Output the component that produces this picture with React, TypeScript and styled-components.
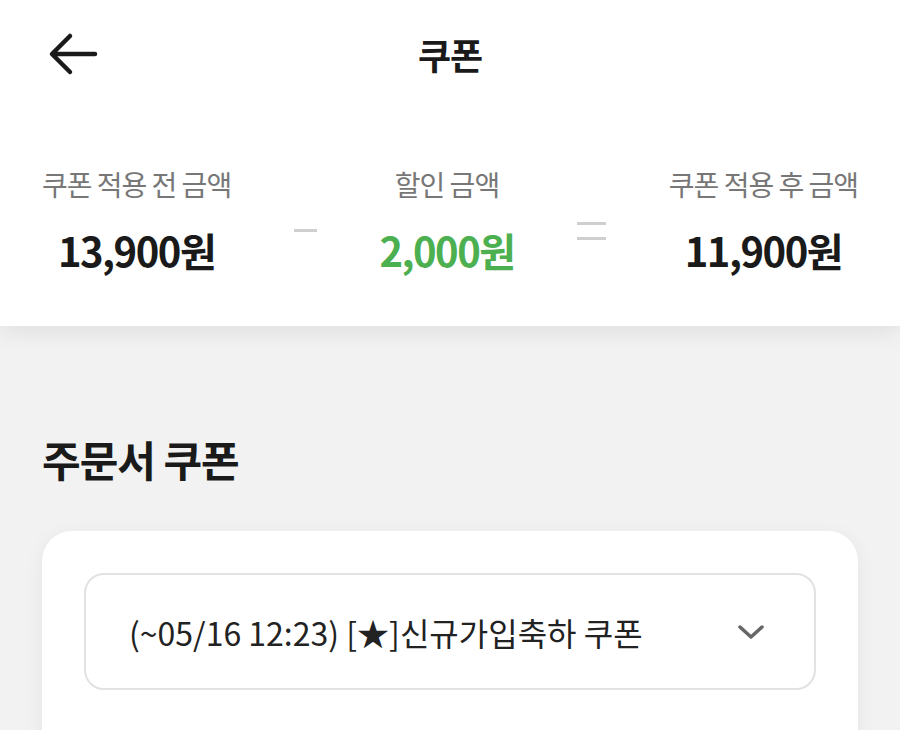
import styled, { createGlobalStyle } from "styled-components";

const GlobalStyle = createGlobalStyle`
  html, body {
    margin: 0;
    padding: 0;
    background: #f2f2f2;
    font-family: "Noto Sans CJK KR", "Noto Sans", sans-serif;
    color: #1a1a1a;
  }
`;

const Page = styled.div`
  width: 900px;
  height: 730px;
  overflow: hidden;
  background: #f2f2f2;
`;

const TopPanel = styled.div`
  background: #fff;
  box-shadow: 0 6px 22px rgba(0, 0, 0, 0.08);
  padding-bottom: 52px;
  position: relative;
  z-index: 1;
`;

const NavBar = styled.div`
  display: grid;
  grid-template-columns: 1fr auto 1fr;
  align-items: center;
  height: 108px;
  padding: 0 48px;
`;

const BackButton = styled.button`
  justify-self: start;
  border: 0;
  background: none;
  padding: 0;
  display: flex;
  cursor: pointer;
`;

const Title = styled.h1`
  margin: 0;
  font-size: 36px;
  font-weight: 700;
  letter-spacing: -1px;
  color: #1a1a1a;
`;

const Summary = styled.div`
  display: flex;
  justify-content: space-between;
  align-items: flex-start;
  padding: 0 42px;
  margin-top: 58px;
`;

const Column = styled.div`
  display: flex;
  flex-direction: column;
  align-items: center;
  gap: 24px;
`;

const Label = styled.div`
  font-size: 28px;
  font-weight: 400;
  color: #777;
  letter-spacing: -1px;
  line-height: 36px;
`;

const Value = styled.div<{ $accent?: boolean }>`
  font-size: 40px;
  font-weight: 700;
  letter-spacing: -1.5px;
  line-height: 48px;
  color: ${(p) => (p.$accent ? "#4caf50" : "#1a1a1a")};
`;

const Operator = styled.div<{ $double?: boolean }>`
  width: ${(p) => (p.$double ? 29 : 23)}px;
  height: ${(p) => (p.$double ? 18 : 3)}px;
  border-top: 3px solid #cfcfcf;
  border-bottom: ${(p) => (p.$double ? "3px solid #cfcfcf" : "0")};
  box-sizing: border-box;
  margin-top: ${(p) => (p.$double ? 56 : 63)}px;
`;

const Section = styled.div`
  padding: 0 42px;
`;

const SectionTitle = styled.h2`
  margin: 108px 0 47px;
  font-size: 42px;
  font-weight: 700;
  letter-spacing: -1px;
  line-height: 50px;
  color: #1a1a1a;
`;

const Card = styled.div`
  background: #fff;
  border-radius: 30px;
  padding: 42px;
  box-shadow: 0 4px 20px rgba(0, 0, 0, 0.06);
  height: 300px;
`;

const Select = styled.div`
  display: flex;
  align-items: center;
  justify-content: space-between;
  height: 117px;
  box-sizing: border-box;
  border: 2px solid #e2e2e2;
  border-radius: 20px;
  padding: 0 48px 0 43px;
`;

const SelectText = styled.span`
  font-size: 32px;
  color: #222;
  letter-spacing: 0;
`;

export default function App() {
  return (
    <Page>
      <GlobalStyle />
      <TopPanel>
        <NavBar>
          <BackButton aria-label="뒤로">
            <svg width="50" height="44" viewBox="0 0 50 44" fill="none">
              <path
                d="M47 22H5M22 4L4 22L22 40"
                stroke="#1a1a1a"
                strokeWidth="4.5"
                strokeLinecap="round"
                strokeLinejoin="round"
              />
            </svg>
          </BackButton>
          <Title>쿠폰</Title>
          <div />
        </NavBar>
        <Summary>
          <Column>
            <Label>쿠폰 적용 전 금액</Label>
            <Value>13,900원</Value>
          </Column>
          <Operator />
          <Column>
            <Label>할인 금액</Label>
            <Value $accent>2,000원</Value>
          </Column>
          <Operator $double />
          <Column>
            <Label>쿠폰 적용 후 금액</Label>
            <Value>11,900원</Value>
          </Column>
        </Summary>
      </TopPanel>
      <Section>
        <SectionTitle>주문서 쿠폰</SectionTitle>
        <Card>
          <Select>
            <SelectText>(~05/16 12:23) [★]신규가입축하 쿠폰</SelectText>
            <svg width="30" height="18" viewBox="0 0 30 18" fill="none">
              <path
                d="M4 4L15 14L26 4"
                stroke="#666"
                strokeWidth="3.5"
                strokeLinecap="round"
                strokeLinejoin="round"
              />
            </svg>
          </Select>
        </Card>
      </Section>
    </Page>
  );
}
